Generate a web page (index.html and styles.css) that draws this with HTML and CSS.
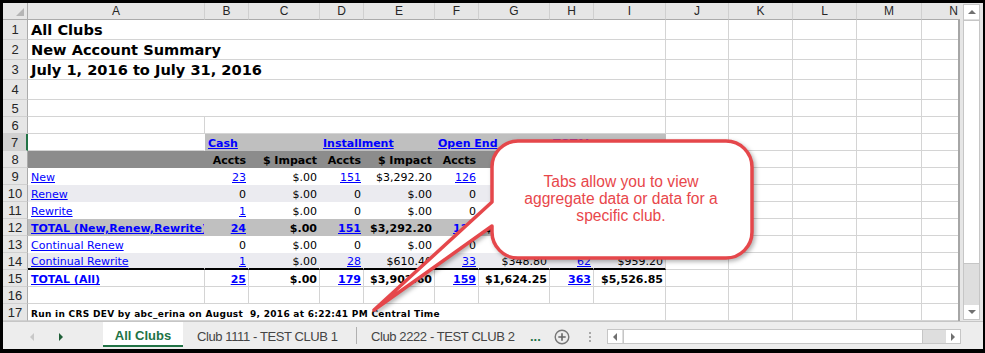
FILE: index.html
```html
<!DOCTYPE html>
<html>
<head>
<meta charset="utf-8">
<link rel="stylesheet" href="styles.css">
</head>
<body>
<div class="app">
  <div class="main">
    <div class="sheet">
      <div class="hdr">
        <div class="r h17">
          <div class="ch corner"><span class="tri"></span></div>
          <div class="ch">A</div><div class="ch">B</div><div class="ch">C</div><div class="ch">D</div><div class="ch">E</div><div class="ch">F</div><div class="ch">G</div><div class="ch">H</div><div class="ch">I</div><div class="ch">J</div><div class="ch">K</div><div class="ch">L</div><div class="ch">M</div><div class="ch">N</div>
        </div>
      </div>
      <div class="body">
        <div class="r h20"><div class="rh">1</div><div class="c s9 t">All Clubs</div><div class="c"></div><div class="c"></div><div class="c"></div><div class="c"></div><div class="c"></div></div>
        <div class="r h20"><div class="rh">2</div><div class="c s9 t">New Account Summary</div><div class="c"></div><div class="c"></div><div class="c"></div><div class="c"></div><div class="c"></div></div>
        <div class="r h20"><div class="rh">3</div><div class="c s9 t">July 1, 2016 to July 31, 2016</div><div class="c"></div><div class="c"></div><div class="c"></div><div class="c"></div><div class="c"></div></div>
        <div class="r h20"><div class="rh">4</div><div class="c s9"></div><div class="c"></div><div class="c"></div><div class="c"></div><div class="c"></div><div class="c"></div></div>
        <div class="r h17"><div class="rh">5</div><div class="c s9"></div><div class="c"></div><div class="c"></div><div class="c"></div><div class="c"></div><div class="c"></div></div>
        <div class="r h17"><div class="rh">6</div><div class="c"></div><div class="c s8"></div><div class="c"></div><div class="c"></div><div class="c"></div><div class="c"></div><div class="c"></div></div>
        <div class="r h17"><div class="rh sel">7</div><div class="c nr"></div><div class="c s2 g7 f b"><a class="l">Cash</a></div><div class="c s2 g7 f b"><a class="l">Installment</a></div><div class="c s2 g7 f b"><a class="l">Open End</a></div><div class="c s2 g7 f b"><a class="l">TOTAL</a></div><div class="c"></div><div class="c"></div><div class="c"></div><div class="c"></div><div class="c"></div></div>
        <div class="r h17"><div class="rh">8</div><div class="c g8 f"></div><div class="c g8 f b R">Accts</div><div class="c g8 f b R">$ Impact</div><div class="c g8 f b R">Accts</div><div class="c g8 f b R">$ Impact</div><div class="c g8 f b R">Accts</div><div class="c g8 f b R">$ Impact</div><div class="c g8 f b R">Accts</div><div class="c g8 f b R">$ Impact</div><div class="c"></div><div class="c"></div><div class="c"></div><div class="c"></div><div class="c"></div></div>
        <div class="r h17"><div class="rh">9</div><div class="c f"><a class="l">New</a></div><div class="c f R"><a class="l">23</a></div><div class="c f R">$.00</div><div class="c f R"><a class="l">151</a></div><div class="c f R">$3,292.20</div><div class="c f R"><a class="l">126</a></div><div class="c f R">$1,275.45</div><div class="c f R"><a class="l">300</a></div><div class="c f ir R">$4,567.65</div><div class="c"></div><div class="c"></div><div class="c"></div><div class="c"></div><div class="c"></div></div>
        <div class="r h17"><div class="rh">10</div><div class="c f lav"><a class="l">Renew</a></div><div class="c f lav R">0</div><div class="c f lav R">$.00</div><div class="c f lav R">0</div><div class="c f lav R">$.00</div><div class="c f lav R">0</div><div class="c f lav R">$.00</div><div class="c f lav R">0</div><div class="c f lav ir R">$.00</div><div class="c"></div><div class="c"></div><div class="c"></div><div class="c"></div><div class="c"></div></div>
        <div class="r h17"><div class="rh">11</div><div class="c f"><a class="l">Rewrite</a></div><div class="c f R"><a class="l">1</a></div><div class="c f R">$.00</div><div class="c f R">0</div><div class="c f R">$.00</div><div class="c f R">0</div><div class="c f R">$.00</div><div class="c f R"><a class="l">1</a></div><div class="c f ir R">$.00</div><div class="c"></div><div class="c"></div><div class="c"></div><div class="c"></div><div class="c"></div></div>
        <div class="r h17"><div class="rh">12</div><div class="c f g12 b"><a class="l">TOTAL (New,Renew,Rewrite)</a></div><div class="c f g12 b R"><a class="l">24</a></div><div class="c f g12 b R">$.00</div><div class="c f g12 b R"><a class="l">151</a></div><div class="c f g12 b R">$3,292.20</div><div class="c f g12 b R"><a class="l">126</a></div><div class="c f g12 b R">$1,275.45</div><div class="c f g12 b R"><a class="l">301</a></div><div class="c f g12 b R">$4,567.65</div><div class="c"></div><div class="c"></div><div class="c"></div><div class="c"></div><div class="c"></div></div>
        <div class="r h17"><div class="rh">13</div><div class="c f"><a class="l">Continual Renew</a></div><div class="c f R">0</div><div class="c f R">$.00</div><div class="c f R">0</div><div class="c f R">$.00</div><div class="c f R">0</div><div class="c f R">$.00</div><div class="c f R">0</div><div class="c f ir R">$.00</div><div class="c"></div><div class="c"></div><div class="c"></div><div class="c"></div><div class="c"></div></div>
        <div class="r h17"><div class="rh">14</div><div class="c f lav thk"><a class="l">Continual Rewrite</a></div><div class="c f lav thk R"><a class="l">1</a></div><div class="c f lav thk R">$.00</div><div class="c f lav thk R"><a class="l">28</a></div><div class="c f lav thk R">$610.40</div><div class="c f lav thk R"><a class="l">33</a></div><div class="c f lav thk R">$348.80</div><div class="c f lav thk R"><a class="l">62</a></div><div class="c f lav thk ir R">$959.20</div><div class="c"></div><div class="c"></div><div class="c"></div><div class="c"></div><div class="c"></div></div>
        <div class="r h17"><div class="rh">15</div><div class="c b"><a class="l">TOTAL (All)</a></div><div class="c b R"><a class="l">25</a></div><div class="c b R">$.00</div><div class="c b R"><a class="l">179</a></div><div class="c b R">$3,902.60</div><div class="c b R"><a class="l">159</a></div><div class="c b R">$1,624.25</div><div class="c b R"><a class="l">363</a></div><div class="c b R">$5,526.85</div><div class="c"></div><div class="c"></div><div class="c"></div><div class="c"></div><div class="c"></div></div>
        <div class="r h17"><div class="rh">16</div><div class="c"></div><div class="c"></div><div class="c"></div><div class="c"></div><div class="c"></div><div class="c"></div><div class="c"></div><div class="c"></div><div class="c"></div><div class="c"></div><div class="c"></div><div class="c"></div><div class="c"></div><div class="c"></div></div>
        <div class="r h17"><div class="rh">17</div><div class="c s9 ft">Run in CRS DEV by abc_erina on August  9, 2016 at 6:22:41 PM Central Time</div><div class="c"></div><div class="c"></div><div class="c"></div><div class="c"></div><div class="c"></div></div>
      </div>
    </div>
    <div class="vs">
      <div class="vbar">
        <div class="vbtn"><span class="up"></span></div>
        <div class="vthumb"></div>
        <div class="vtrack"></div>
        <div class="vbtn"><span class="down"></span></div>
      </div>
    </div>
  </div>
  <div class="tabbar">
    <div class="nav"><span class="arr-l"></span><span class="arr-r"></span></div>
    <div class="tab active">All Clubs</div>
    <div class="tab t2">Club 1111 - TEST CLUB 1</div>
    <div class="sep"></div>
    <div class="tab t3">Club 2222 - TEST CLUB 2</div>
    <div class="more">...</div>
    <div class="add"><svg width="16" height="16" viewBox="0 0 16 16"><circle cx="8" cy="8" r="6.8" fill="none" stroke="#777" stroke-width="1.4"/><path d="M8 4.3V11.7M4.3 8H11.7" stroke="#666" stroke-width="1.6"/></svg></div>
    <div class="vdots"><span></span><span></span><span></span></div>
    <div class="hs">
      <div class="hbtn"><span class="left"></span></div>
      <div class="hthumb"></div>
      <div class="htrack"></div>
      <div class="hbtn"><span class="right"></span></div>
    </div>
  </div>
</div>
<svg class="callout" width="985" height="353" viewBox="0 0 985 353">
  <path d="M518 141H726A26 26 0 0 1 752 167V232A26 26 0 0 1 726 258H518A26 26 0 0 1 492 232V226L374 310L492 202V167A26 26 0 0 1 518 141Z" fill="#fff" stroke="#e5474b" stroke-width="3.5" stroke-linejoin="round"/>
</svg>
<div class="ctext">Tabs allow you to view<br>aggregate data or data for a<br>specific club.</div>
</body>
</html>
```
FILE: styles.css
```css
html, body {
  margin: 0;
  padding: 0;
  background: #000;
}
body {
  position: relative;
  width: 985px;
  height: 353px;
  overflow: hidden;
}
.app {
  margin: 3px 0 0 3px;
  width: 980px;
  height: 346px;
  background: #fff;
  display: flex;
  flex-direction: column;
}
.main {
  display: flex;
  height: 318px;
}
.sheet {
  width: 957px;
}
.hdr {
  width: 957px;
  overflow: hidden;
}
.body {
  width: 955px;
  overflow: hidden;
  border-right: 2px solid #a6a6a6;
}
.r {
  display: grid;
  grid-template-columns: 25px 177px 44px 71px 44px 71px 44px 71px 44px 72px 63px 64px 64px 65px 64px;
  width: 983px;
}
.h17 { height: 17px; }
.h20 { height: 20px; }

.ch {
  box-sizing: border-box;
  background: #e6e6e6;
  border-right: 1px solid #d0d0d0;
  border-bottom: 1px solid #ababab;
  font-family: "Liberation Sans", Arial, sans-serif;
  font-size: 12px;
  color: #262626;
  text-align: center;
  line-height: 16px;
}
.corner {
  display: flex;
  align-items: flex-end;
  justify-content: flex-end;
  padding: 0 3px 3px 0;
  border-right-color: #ababab;
}
.tri {
  width: 0;
  height: 0;
  border-left: 8px solid transparent;
  border-bottom: 8px solid #b5b5b5;
}
.rh {
  box-sizing: border-box;
  background: #e6e6e6;
  border-right: 1px solid #ababab;
  border-bottom: 1px solid #d0d0d0;
  font-family: "Liberation Sans", Arial, sans-serif;
  font-size: 13px;
  color: #262626;
  display: flex;
  align-items: center;
  justify-content: center;
}
.rh.sel {
  background: #d2d2d2;
  border-right: 2px solid #217346;
}
.c {
  box-sizing: border-box;
  border-right: 1px solid #d4d4d4;
  border-bottom: 1px solid #d4d4d4;
  font-family: "DejaVu Sans", Verdana, sans-serif;
  font-size: 11px;
  line-height: 13px;
  color: #000;
  display: flex;
  align-items: flex-end;
  padding: 0 2px 0 3px;
  white-space: nowrap;
  overflow: hidden;
}
.s9 { grid-column: span 9; }
.s8 { grid-column: span 8; }
.s2 { grid-column: span 2; }
.R { justify-content: flex-end; }
.b { font-weight: bold; }
.nr { border-right-color: transparent; }
.f {
  border-right-color: transparent;
  border-bottom-color: transparent;
}
.ir { border-right-color: #d4d4d4; }
.g7 { background: #bfbfbf; }
.g8 { background: #8c8c8c; }
.g12 { background: #c0c0c0; }
.lav { background: #ebebf0; }
.thk { border-bottom: 2px solid #000; }
.t {
  font-weight: bold;
  font-size: 14.6px;
  line-height: 17px;
  padding-bottom: 1px;
}
.ft {
  font-weight: bold;
  font-size: 9px;
  letter-spacing: 0.3px;
  line-height: 12px;
  white-space: pre;
}
.l {
  color: #0000ff;
  text-decoration: underline;
}

/* vertical scrollbar */
.vs {
  width: 23px;
  background: #e6e6e6;
  padding: 1px 3px 0 3px;
  box-sizing: border-box;
}
.vbar {
  width: 17px;
  height: 316px;
  box-sizing: border-box;
  border: 1px solid #c6c6c6;
  background: #dedede;
  display: flex;
  flex-direction: column;
}
.vbtn {
  height: 14px;
  background: #fff;
  display: flex;
  align-items: center;
  justify-content: center;
}
.vthumb {
  margin-top: 1px;
  height: 242px;
  background: #fff;
  border-top: 1px solid #c6c6c6;
  border-bottom: 1px solid #c6c6c6;
}
.vtrack { flex: 1; }
.up {
  width: 0; height: 0;
  border-left: 4px solid transparent;
  border-right: 4px solid transparent;
  border-bottom: 4px solid #707070;
}
.down {
  width: 0; height: 0;
  border-left: 4px solid transparent;
  border-right: 4px solid transparent;
  border-top: 4px solid #707070;
}

/* tab bar */
.tabbar {
  height: 28px;
  box-sizing: border-box;
  border-top: 1px solid #c6c6c6;
  background: #ededed;
  display: flex;
  align-items: flex-start;
  font-family: "Liberation Sans", Arial, sans-serif;
}
.nav {
  width: 100px;
  height: 27px;
  box-sizing: border-box;
  padding-left: 27px;
  display: flex;
  align-items: center;
}
.arr-l {
  width: 0; height: 0;
  border-top: 4px solid transparent;
  border-bottom: 4px solid transparent;
  border-right: 4px solid #c8c8c8;
  margin-top: 3px;
}
.arr-r {
  width: 0; height: 0;
  border-top: 4px solid transparent;
  border-bottom: 4px solid transparent;
  border-left: 4px solid #1f5f38;
  margin-left: 25px;
  margin-top: 3px;
}
.tab {
  height: 25px;
  box-sizing: border-box;
  padding-top: 3px;
  display: flex;
  align-items: center;
  font-size: 13px;
  white-space: nowrap;
}
.tab.active {
  width: 80px;
  justify-content: center;
  background: #fff;
  border-bottom: 2px solid #217346;
  color: #217346;
  font-weight: bold;
}
.t2, .t3 {
  color: #444;
  padding-left: 14px;
  letter-spacing: -0.4px;
}
.t2 { width: 173px; }
.t3 { width: 165px; }
.sep {
  width: 1px;
  height: 17px;
  margin-top: 5px;
  background: #b0b0b0;
}
.more {
  width: 26px;
  height: 25px;
  box-sizing: border-box;
  padding: 3px 0 0 8px;
  display: flex;
  align-items: center;
  color: #217346;
  font-weight: bold;
  font-size: 13px;
}
.add {
  width: 28px;
  height: 27px;
  display: flex;
  align-items: center;
  justify-content: center;
  padding-top: 2px;
  box-sizing: border-box;
}
.vdots {
  width: 28px;
  height: 27px;
  display: flex;
  flex-direction: column;
  align-items: center;
  justify-content: center;
  gap: 2px;
  padding-top: 2px;
  box-sizing: border-box;
}
.vdots span {
  width: 2px;
  height: 2px;
  background: #a8a8a8;
}
.hs {
  margin: 7px 0 0 3px;
  width: 354px;
  height: 15px;
  box-sizing: border-box;
  border: 1px solid #c6c6c6;
  background: #dedede;
  display: flex;
}
.hbtn {
  width: 14px;
  background: #fff;
  display: flex;
  align-items: center;
  justify-content: center;
}
.hthumb {
  width: 298px;
  margin-left: 1px;
  background: #fff;
  border-left: 1px solid #c6c6c6;
  border-right: 1px solid #c6c6c6;
}
.htrack { flex: 1; }
.left {
  width: 0; height: 0;
  border-top: 4px solid transparent;
  border-bottom: 4px solid transparent;
  border-right: 4px solid #707070;
}
.right {
  width: 0; height: 0;
  border-top: 4px solid transparent;
  border-bottom: 4px solid transparent;
  border-left: 4px solid #707070;
}

/* callout */
.callout {
  position: absolute;
  left: 0;
  top: 0;
  filter: drop-shadow(2px 2px 2px rgba(0, 0, 0, 0.3));
}
.ctext {
  position: absolute;
  left: 490px;
  top: 173px;
  width: 262px;
  text-align: center;
  font-family: "Liberation Sans", Arial, sans-serif;
  font-size: 15.6px;
  line-height: 17px;
  color: #e8474b;
}
```
